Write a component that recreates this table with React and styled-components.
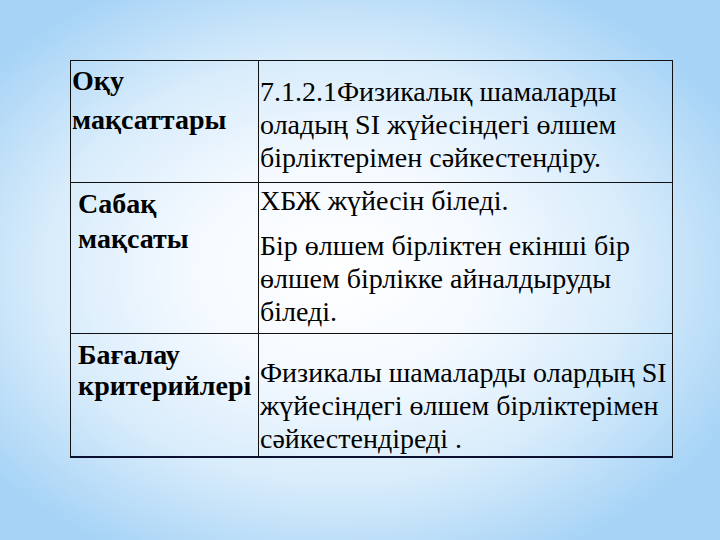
import styled, { createGlobalStyle } from 'styled-components';

const GlobalStyle = createGlobalStyle`
  html, body {
    margin: 0;
    padding: 0;
  }
  body {
    font-family: "Liberation Serif", "Times New Roman", serif;
    color: #000;
  }
`;

const Slide = styled.div`
  width: 720px;
  height: 540px;
  box-sizing: border-box;
  padding: 60px 0 0 70px;
  background: radial-gradient(ellipse 62% 60% at 47% 50%, #ffffff 0%, #f5faff 32%, #d8ecfb 66%, #a6d3f6 100%);
  overflow: hidden;
`;

const Table = styled.div`
  display: grid;
  grid-template-columns: 188px 414px;
  grid-template-rows: 122px 151px 124px;
  width: 603px;
  border-top: 1px solid #111;
  border-left: 1px solid #111;
  box-sizing: border-box;
`;

const Cell = styled.div`
  border-right: 1px solid #111;
  border-bottom: ${(p) => (p.$last ? '2px solid #0b1030' : '1px solid #111')};
  display: flex;
  flex-direction: column;
  padding: ${(p) => p.$pad || '0'};
  min-width: 0;
  overflow: hidden;
`;

const Label = styled.div`
  font-weight: bold;
  font-size: 28px;
  line-height: ${(p) => p.$lh || 30}px;
  white-space: nowrap;
`;

const Text = styled.p`
  margin: 0;
  font-size: 28px;
  line-height: 33px;
  & + & {
    margin-top: 12px;
  }
`;

export default function App() {
  return (
    <>
      <GlobalStyle />
      <Slide>
        <Table>
          <Cell $pad="0 0 0 1px">
            <Label $lh={39}>Оқу</Label>
            <Label $lh={39}>мақсаттары</Label>
          </Cell>
          <Cell $pad="14px 0 0 1px">
            <Text>7.1.2.1Физикалық шамаларды оладың SI жүйесіндегі өлшем бірліктерімен сәйкестендіру.</Text>
          </Cell>
          <Cell $pad="3px 0 0 7px">
            <Label $lh={35}>Сабақ</Label>
            <Label $lh={35}>мақсаты</Label>
          </Cell>
          <Cell $pad="1px 0 0 1px">
            <Text>ХБЖ жүйесін біледі.</Text>
            <Text>Бір өлшем бірліктен екінші бір өлшем бірлікке айналдыруды біледі.</Text>
          </Cell>
          <Cell $last $pad="5px 0 0 7px">
            <Label $lh={31}>Бағалау</Label>
            <Label $lh={31}>критерийлері</Label>
          </Cell>
          <Cell $last $pad="22px 0 0 1px">
            <Text>Физикалы шамаларды олардың SI жүйесіндегі өлшем бірліктерімен сәйкестендіреді .</Text>
          </Cell>
        </Table>
      </Slide>
    </>
  );
}
